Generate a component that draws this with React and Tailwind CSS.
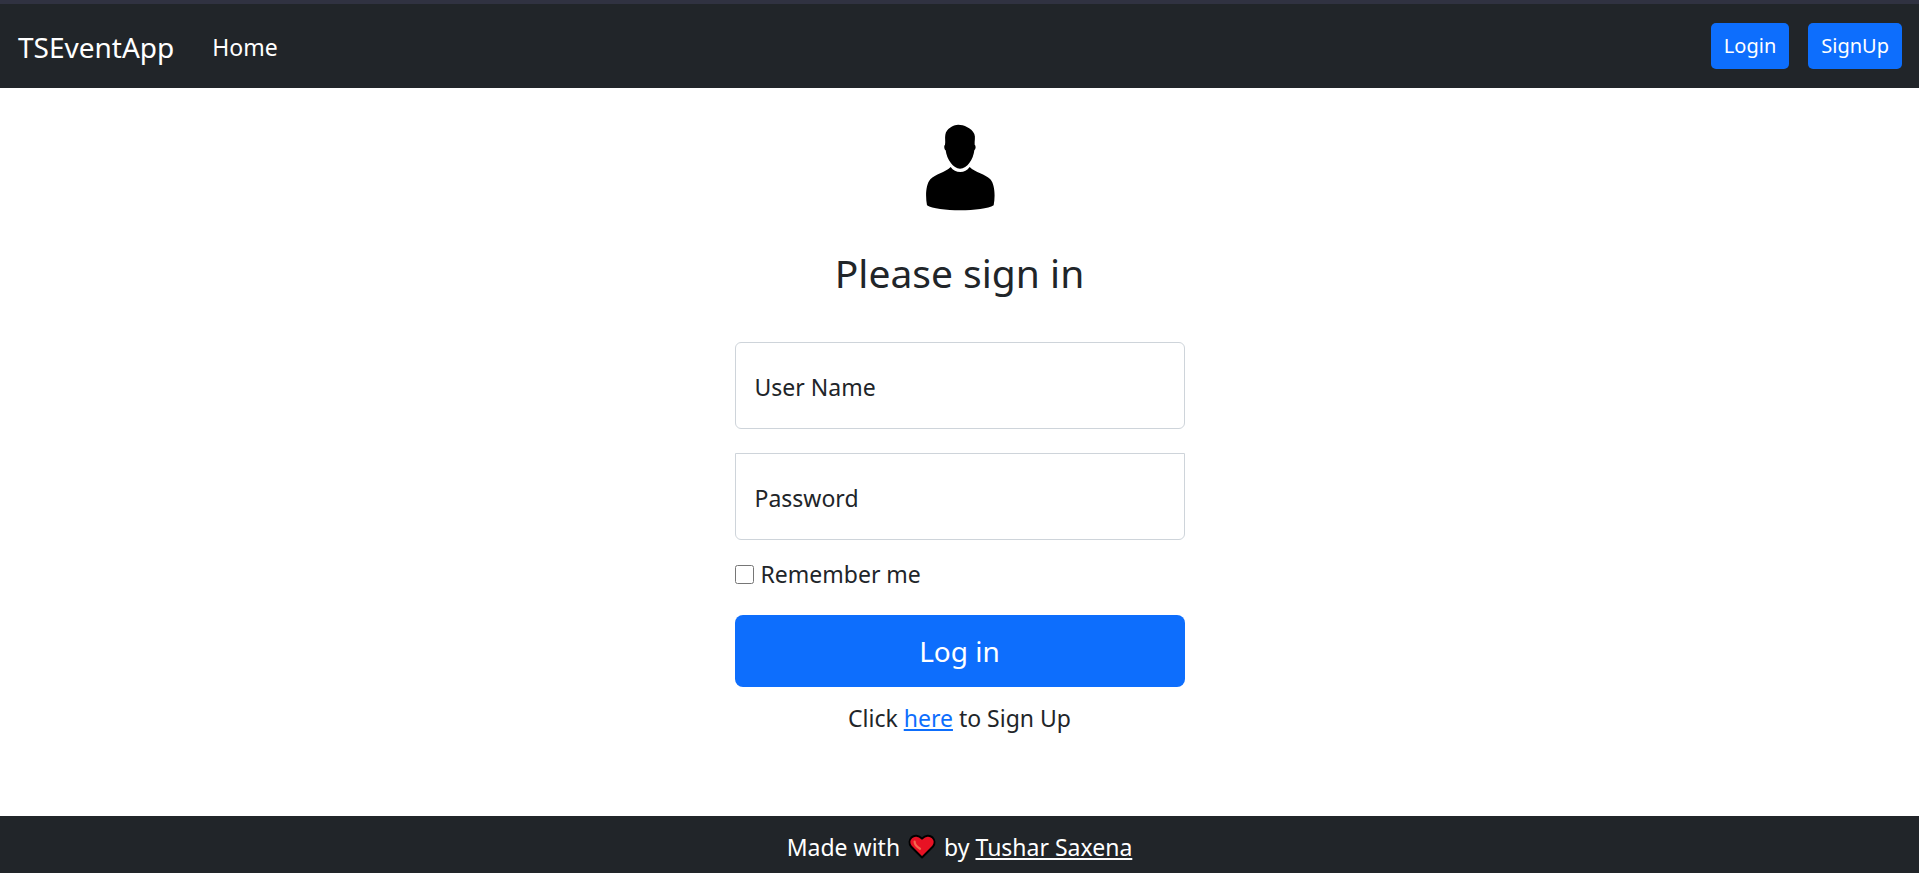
function UserIcon() {
  return (
    <svg viewBox="75 40 210 261" className="h-[87px] w-[70px]" aria-hidden="true">
      <path d="M175 42C158 43 139 54 136 72C134 82 137 92 135 102C131 105 133 116 137 119C140 146 160 174 180 174C202 174 220 146 223 119C228 115 228 105 224 102C223 92 227 80 223 70C216 52 190 42 175 42Z" />
      <path d="M152 169C159 179 169 184 181 184C192 184 202 179 209 169C226 186 256 190 271 206C285 222 286 258 281 284C250 304 111 304 81 284C76 258 77 222 91 206C106 190 135 186 152 169Z" />
    </svg>
  );
}

function Heart() {
  return (
    <svg viewBox="0 0 28 26" className="h-[26px] w-7" role="img" aria-label="love">
      <path
        d="M14 23.5L3 12.5C0.8 9.6 1.2 5.8 3.4 3.6C6.2 1 10.6 1.2 14 4.6C17.4 1.2 21.8 1 24.6 3.6C26.8 5.8 27.2 9.6 25 12.5Z"
        fill="#e81224"
        stroke="#000"
        strokeWidth="2"
        strokeLinejoin="round"
      />
      <path d="M6.6 7.6C6.6 10.6 9.6 13.4 12 14.8" fill="none" stroke="#f4694f" strokeWidth="2.2" strokeLinecap="round" />
    </svg>
  );
}

function Field({ id, label, type, shape }) {
  return (
    <div className="grid h-[87px]">
      <input
        id={id}
        type={type}
        className={`col-start-1 row-start-1 w-full border border-[#ced4da] bg-white px-[18px] outline-none focus:border-[#86b7fe] ${shape}`}
      />
      <label htmlFor={id} className="pointer-events-none col-start-1 row-start-1 self-center px-5 pt-0.5">
        {label}
      </label>
    </div>
  );
}

export default function App() {
  return (
    <div className="flex min-h-screen flex-col bg-white font-['Noto_Sans',sans-serif] text-[23px] leading-9 text-[#212529]">
      <header className="flex min-h-[88px] items-center border-t-4 border-[#303241] bg-[#212529] pr-[17px] pl-[18px] text-white">
        <a href="#" className="pt-0.5 text-[28px]">TSEventApp</a>
        <nav className="ml-[38px] grow pt-0.5">
          <a href="#">Home</a>
        </nav>
        <div className="flex gap-[19px]">
          <button type="button" className="h-[46px] rounded-[5px] bg-[#0d6efd] px-[13px] text-xl">Login</button>
          <button type="button" className="h-[46px] rounded-[5px] bg-[#0d6efd] px-[13px] text-xl">SignUp</button>
        </div>
      </header>

      <main className="mx-auto w-full max-w-[450px] grow pt-9">
        <form className="flex flex-col">
          <div className="flex justify-center">
            <UserIcon />
          </div>
          <h1 className="mt-9 text-center text-[39px] leading-[51px]">Please sign in</h1>
          <div className="mt-11 flex flex-col gap-6">
            <Field id="username" label="User Name" type="text" shape="rounded-md" />
            <Field id="password" label="Password" type="password" shape="rounded-b-md" />
          </div>
          <div className="mt-4 flex items-center gap-[7px]">
            <input id="remember" type="checkbox" className="size-[19px]" />
            <label htmlFor="remember">Remember me</label>
          </div>
          <button type="submit" className="mt-[23px] h-[72px] rounded-lg bg-[#0d6efd] text-[28px] text-white">Log in</button>
          <p className="mt-[13px] text-center">
            Click <a href="#" className="text-[#0d6efd] underline">here</a> to Sign Up
          </p>
        </form>
      </main>

      <footer className="flex min-h-[57px] items-center justify-center gap-2 bg-[#212529] pt-1 text-white">
        <span>Made with</span>
        <Heart />
        <span>by <a href="#" className="underline">Tushar Saxena</a></span>
      </footer>
    </div>
  );
}
